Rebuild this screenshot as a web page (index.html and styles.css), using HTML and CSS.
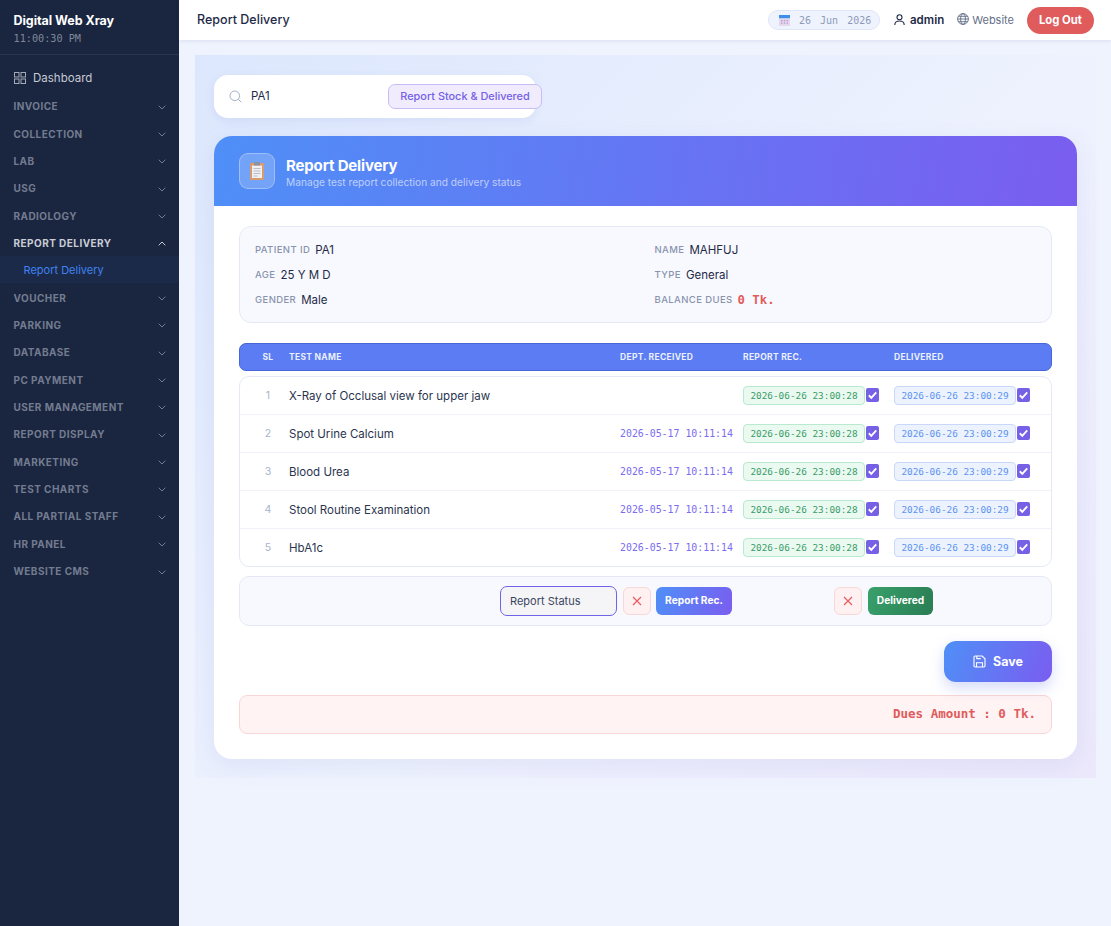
FILE: index.html
```html
<!DOCTYPE html>
<html lang="en">
<head>
<meta charset="utf-8">
<title>Report Delivery</title>
<link rel="stylesheet" href="styles.css">
</head>
<body>
<div class="app">
  <aside class="sidebar">
    <div class="brand">
      <div class="brand-name">Digital Web Xray</div>
      <div class="brand-time">11:00:30 PM</div>
    </div>
    <nav class="nav">
      <a class="dash"><svg width="12" height="12" viewBox="0 0 12 12" fill="none" stroke="currentColor"><rect x=".5" y=".5" width="4.5" height="4.5"/><rect x="7" y=".5" width="4.5" height="4.5"/><rect x=".5" y="7" width="4.5" height="4.5"/><rect x="7" y="7" width="4.5" height="4.5"/></svg>Dashboard</a>
      <a class="group">INVOICE<svg class="chev" viewBox="0 0 8 5"><path d="M.7.7 4 4 7.3.7"/></svg></a>
      <a class="group">COLLECTION<svg class="chev" viewBox="0 0 8 5"><path d="M.7.7 4 4 7.3.7"/></svg></a>
      <a class="group">LAB<svg class="chev" viewBox="0 0 8 5"><path d="M.7.7 4 4 7.3.7"/></svg></a>
      <a class="group">USG<svg class="chev" viewBox="0 0 8 5"><path d="M.7.7 4 4 7.3.7"/></svg></a>
      <a class="group">RADIOLOGY<svg class="chev" viewBox="0 0 8 5"><path d="M.7.7 4 4 7.3.7"/></svg></a>
      <a class="group open">REPORT DELIVERY<svg class="chev" viewBox="0 0 8 5"><path d="M.7 4.3 4 1 7.3 4.3"/></svg></a>
      <a class="sub">Report Delivery</a>
      <a class="group">VOUCHER<svg class="chev" viewBox="0 0 8 5"><path d="M.7.7 4 4 7.3.7"/></svg></a>
      <a class="group">PARKING<svg class="chev" viewBox="0 0 8 5"><path d="M.7.7 4 4 7.3.7"/></svg></a>
      <a class="group">DATABASE<svg class="chev" viewBox="0 0 8 5"><path d="M.7.7 4 4 7.3.7"/></svg></a>
      <a class="group">PC PAYMENT<svg class="chev" viewBox="0 0 8 5"><path d="M.7.7 4 4 7.3.7"/></svg></a>
      <a class="group">USER MANAGEMENT<svg class="chev" viewBox="0 0 8 5"><path d="M.7.7 4 4 7.3.7"/></svg></a>
      <a class="group">REPORT DISPLAY<svg class="chev" viewBox="0 0 8 5"><path d="M.7.7 4 4 7.3.7"/></svg></a>
      <a class="group">MARKETING<svg class="chev" viewBox="0 0 8 5"><path d="M.7.7 4 4 7.3.7"/></svg></a>
      <a class="group">TEST CHARTS<svg class="chev" viewBox="0 0 8 5"><path d="M.7.7 4 4 7.3.7"/></svg></a>
      <a class="group">ALL PARTIAL STAFF<svg class="chev" viewBox="0 0 8 5"><path d="M.7.7 4 4 7.3.7"/></svg></a>
      <a class="group">HR PANEL<svg class="chev" viewBox="0 0 8 5"><path d="M.7.7 4 4 7.3.7"/></svg></a>
      <a class="group">WEBSITE CMS<svg class="chev" viewBox="0 0 8 5"><path d="M.7.7 4 4 7.3.7"/></svg></a>
    </nav>
  </aside>
  <div class="main">
    <header class="topbar">
      <div class="page-title">Report Delivery</div>
      <div class="top-right">
        <div class="date-pill">
          <svg width="11" height="11" viewBox="0 0 11 11"><rect x="0" y="0" width="11" height="3.5" fill="#3f8fe8"/><rect x="0" y="3.5" width="11" height="7.5" fill="#e6d6ee"/><path d="M2 5h1.4v1.2H2zM4.8 5h1.4v1.2H4.8zM7.6 5H9v1.2H7.6zM2 7.6h1.4v1.2H2zM4.8 7.6h1.4v1.2H4.8zM7.6 7.6H9v1.2H7.6z" fill="#a99cc8"/></svg>
          <span>26 Jun 2026</span>
        </div>
        <div class="user"><svg width="11" height="12" viewBox="0 0 11 12" fill="none" stroke="#1e2a47" stroke-width="1.1"><circle cx="5.5" cy="3.3" r="2.5"/><path d="M.8 11c0-2.6 2-4 4.7-4s4.700 1.400 4.700 4"/></svg>admin</div>
        <div class="web"><svg width="12" height="12" viewBox="0 0 12 12" fill="none" stroke="#5f6b85" stroke-width=".9"><circle cx="6" cy="6" r="5.400"/><ellipse cx="6" cy="6" rx="2.400" ry="5.400"/><path d="M.6 6h10.800M1.400 3.300h9.200M1.400 8.700h9.200"/></svg><span>Website</span></div>
        <button class="logout">Log Out</button>
      </div>
    </header>
    <main class="content">
      <div class="inner">
        <div class="search-row">
          <div class="search">
            <svg width="13" height="13" viewBox="0 0 13 13" fill="none" stroke="#a3b0c8" stroke-width="1"><circle cx="5.800" cy="5.800" r="4.800"/><path d="m9.300 9.300 3 3"/></svg>
            <span class="search-val">PA1</span>
          </div>
          <button class="stock">Report Stock &amp; Delivered</button>
        </div>
        <section class="card">
          <div class="card-head">
            <div class="head-icon"><svg width="14" height="18" viewBox="0 0 14 18"><rect x="0" y="1" width="14" height="17" rx="1" fill="#d99a6c"/><rect x="2" y="3.500" width="10" height="12.500" fill="#eef0f4"/><rect x="4" y="0" width="6" height="3.500" rx=".6" fill="#8b93a3"/><path d="M3.500 6.500h7M3.500 9h7M3.500 11.500h7M3.500 14h4" stroke="#a9afbd" stroke-width=".8"/></svg></div>
            <div>
              <h1>Report Delivery</h1>
              <p>Manage test report collection and delivery status</p>
            </div>
          </div>
          <div class="card-body">
            <div class="info">
              <div class="info-item"><label>PATIENT ID</label><b>PA1</b></div>
              <div class="info-item"><label>NAME</label><b>MAHFUJ</b></div>
              <div class="info-item"><label>AGE</label><b>25 Y M D</b></div>
              <div class="info-item"><label>TYPE</label><b>General</b></div>
              <div class="info-item"><label>GENDER</label><b>Male</b></div>
              <div class="info-item"><label>BALANCE DUES</label><b class="dues">0 Tk.</b></div>
            </div>
            <div class="thead row-grid">
              <span class="c-sl">SL</span><span>TEST NAME</span><span>DEPT. RECEIVED</span><span>REPORT REC.</span><span>DELIVERED</span>
            </div>
            <div class="tbody">
              <div class="row row-grid">
                <span class="c-sl num">1</span><span class="name">X-Ray of Occlusal view for upper jaw</span><span class="dept"></span>
                <div class="stamp-cell"><span class="stamp green">2026-06-26 23:00:28</span><i class="check"><svg viewBox="0 0 14 14"><path d="m3 7.300 2.700 2.700L11 4.200"/></svg></i></div>
                <div class="stamp-cell"><span class="stamp blue">2026-06-26 23:00:29</span><i class="check"><svg viewBox="0 0 14 14"><path d="m3 7.300 2.700 2.700L11 4.200"/></svg></i></div>
              </div>
              <div class="row row-grid">
                <span class="c-sl num">2</span><span class="name">Spot Urine Calcium</span><span class="dept">2026-05-17 10:11:14</span>
                <div class="stamp-cell"><span class="stamp green">2026-06-26 23:00:28</span><i class="check"><svg viewBox="0 0 14 14"><path d="m3 7.300 2.700 2.700L11 4.200"/></svg></i></div>
                <div class="stamp-cell"><span class="stamp blue">2026-06-26 23:00:29</span><i class="check"><svg viewBox="0 0 14 14"><path d="m3 7.300 2.700 2.700L11 4.200"/></svg></i></div>
              </div>
              <div class="row row-grid">
                <span class="c-sl num">3</span><span class="name">Blood Urea</span><span class="dept">2026-05-17 10:11:14</span>
                <div class="stamp-cell"><span class="stamp green">2026-06-26 23:00:28</span><i class="check"><svg viewBox="0 0 14 14"><path d="m3 7.300 2.700 2.700L11 4.200"/></svg></i></div>
                <div class="stamp-cell"><span class="stamp blue">2026-06-26 23:00:29</span><i class="check"><svg viewBox="0 0 14 14"><path d="m3 7.300 2.700 2.700L11 4.200"/></svg></i></div>
              </div>
              <div class="row row-grid">
                <span class="c-sl num">4</span><span class="name">Stool Routine Examination</span><span class="dept">2026-05-17 10:11:14</span>
                <div class="stamp-cell"><span class="stamp green">2026-06-26 23:00:28</span><i class="check"><svg viewBox="0 0 14 14"><path d="m3 7.300 2.700 2.700L11 4.200"/></svg></i></div>
                <div class="stamp-cell"><span class="stamp blue">2026-06-26 23:00:29</span><i class="check"><svg viewBox="0 0 14 14"><path d="m3 7.300 2.700 2.700L11 4.200"/></svg></i></div>
              </div>
              <div class="row row-grid">
                <span class="c-sl num">5</span><span class="name">HbA1c</span><span class="dept">2026-05-17 10:11:14</span>
                <div class="stamp-cell"><span class="stamp green">2026-06-26 23:00:28</span><i class="check"><svg viewBox="0 0 14 14"><path d="m3 7.300 2.700 2.700L11 4.200"/></svg></i></div>
                <div class="stamp-cell"><span class="stamp blue">2026-06-26 23:00:29</span><i class="check"><svg viewBox="0 0 14 14"><path d="m3 7.300 2.700 2.700L11 4.200"/></svg></i></div>
              </div>
            </div>
            <div class="actions">
              <div class="status-select">Report Status</div>
              <button class="x"><svg viewBox="0 0 10 10"><path d="m1 1 8 8M9 1 1 9"/></svg></button>
              <button class="act act-blue">Report Rec.</button>
              <button class="x x2"><svg viewBox="0 0 10 10"><path d="m1 1 8 8M9 1 1 9"/></svg></button>
              <button class="act act-green">Delivered</button>
            </div>
            <div class="save-row">
              <button class="save"><svg width="13" height="13" viewBox="0 0 13 13" fill="none" stroke="#fff" stroke-width="1.100"><path d="M1 2.200C1 1.500 1.500 1 2.200 1h7L12 3.800v7c0 .7-.5 1.200-1.200 1.200H2.200C1.500 12 1 11.500 1 10.800z"/><path d="M3.500 12V7.800h6V12M3.800 1v2.600h4"/></svg>Save</button>
            </div>
            <div class="dues-bar">Dues Amount : 0 Tk.</div>
          </div>
        </section>
      </div>
    </main>
  </div>
</div>
</body>
</html>
```

FILE: styles.css
```css
* { box-sizing: border-box; }
html, body { margin: 0; height: 100%; }
body { font-family: "Inter", "Noto Sans", sans-serif; color: #1e2a47; background: #eff3fe; overflow: hidden; }
button { font-family: inherit; border: 0; cursor: pointer; padding: 0; }

.app { display: flex; height: 926px; }

.sidebar { width: 179px; flex: none; background: #1a2540; color: #fff; }
.brand { height: 55px; padding: 13px 13.500px 0; border-bottom: 1px solid #29344f; }
.brand-name { font-size: 12.500px; font-weight: 700; line-height: 16px; letter-spacing: -.05px; }
.brand-time { font-family: "DejaVu Sans Mono", monospace; font-size: 10.200px; line-height: 14px; margin-top: 3px; color: #7f8899; }
.nav { display: flex; flex-direction: column; padding-top: 9px; }
.nav a { display: flex; align-items: center; }
.dash { height: 28px; padding-left: 14px; gap: 7px; font-size: 11.500px; color: #c6cbd5; }
.dash svg { color: #a3a9b7; }
.group { height: 27.350px; padding: 1px 13px 0 13.500px; justify-content: space-between; font-size: 10px; font-weight: 700; letter-spacing: .45px; color: #737c8f; }
.group.open { color: #c9cdd6; }
.chev { width: 8px; height: 5px; fill: none; stroke: currentColor; stroke-width: 1; margin-top: 2px; }
.sub { height: 27.350px; padding-left: 23.500px; font-size: 11px; color: #3f82f0; background: #1c2a4a; }

.main { flex: 1; min-width: 0; display: flex; flex-direction: column; }
.topbar { height: 40px; flex: none; background: #fff; box-shadow: 0 1px 4px rgba(60, 80, 140, .12); display: flex; align-items: center; justify-content: space-between; padding: 0 17px 0 18px; position: relative; }
.page-title { font-size: 12.500px; font-weight: 500; color: #1e2a47; letter-spacing: .02px; margin-top: -2px; }
.top-right { display: flex; align-items: center; }
.date-pill { display: flex; align-items: center; gap: 9px; height: 20px; width: 112px; padding-left: 10px; background: #eff3fe; border: 1px solid #dfe6f7; border-radius: 10px; font-family: "DejaVu Sans Mono", monospace; font-size: 10px; color: #8d9ab8; word-spacing: 3px; }
.user { display: flex; align-items: center; gap: 5px; margin-left: 14px; font-size: 11.500px; font-weight: 600; color: #1e2a47; }
.web { display: flex; align-items: center; gap: 3px; margin-left: 13px; font-size: 11px; color: #646f88; }
.web svg { margin-top: -2px; }
.logout { margin-left: 13px; width: 67px; height: 27px; border-radius: 14px; background: #e05c5c; color: #fff; font-size: 11.300px; font-weight: 700; }

.content { flex: 1; padding: 15px 15px 0 16px; }
.inner { height: 723px; padding: 20px 19px 0 19px; background: linear-gradient(135deg, #dce7fd 0%, #eef2fe 55%, #ece8fc 100%); }
.search-row { display: flex; align-items: center; height: 43px; }
.search { width: 322px; height: 43px; background: #fff; border-radius: 14px; box-shadow: 0 3px 10px rgba(90, 110, 190, .1); display: flex; align-items: center; gap: 9px; padding-left: 15px; }
.search-val { font-size: 11.500px; color: #1e2a47; margin-top: -2px; }
.stock { margin-left: -148px; position: relative; width: 154px; height: 25px; border-radius: 7px; background: #f0ecfe; border: 1px solid #c9bdf8; color: #7560e6; font-size: 10.900px; font-weight: 500; margin-top: -1px; }

.card { margin-top: 18px; background: #fff; border-radius: 18px; overflow: hidden; box-shadow: 0 6px 24px rgba(90, 110, 190, .1); height: 623px; }
.card-head { height: 70px; background: linear-gradient(100deg, #4f8ff7 0%, #7a5df0 100%); display: flex; align-items: center; gap: 11px; padding: 0 25px; color: #fff; }
.card-head > div:last-child { padding-top: 2px; }
.head-icon { width: 36px; height: 36px; border-radius: 9px; background: rgba(255, 255, 255, .2); border: 1px solid rgba(255, 255, 255, .3); display: flex; align-items: center; justify-content: center; }
.card-head h1 { margin: 0; font-size: 15px; line-height: 19px; font-weight: 700; letter-spacing: -.15px; }
.card-head p { margin: 1px 0 0; font-size: 10.200px; line-height: 13px; color: rgba(255, 255, 255, .62); }
.card-body { padding: 20px 25px 0; }

.info { height: 97px; background: #f8f9fe; border: 1px solid #e5e9f5; border-radius: 12px; padding: 10px 15px; display: grid; grid-template-columns: 399.500px 1fr; grid-auto-rows: 25px; }
.info-item { display: flex; align-items: center; gap: 5px; }
.info-item label { font-size: 9.500px; font-weight: 500; letter-spacing: .4px; color: #8893ad; }
.info-item b { font-size: 11.500px; font-weight: 400; color: #1e2a47; }
.info-item b.dues { font-family: "DejaVu Sans Mono", monospace; font-weight: 700; font-size: 12.300px; color: #e05c5c; }

.row-grid { display: grid; grid-template-columns: 49px 331px 123px 151px 1fr; align-items: center; }
.c-sl { text-align: center; padding-left: 7px; }
.thead { height: 28px; margin-top: 20px; background: #5b7cf2; border: 1px solid #4766d8; border-radius: 7px; color: #eaf0ff; font-size: 8.500px; font-weight: 700; letter-spacing: .3px; }
.tbody { margin-top: 5px; border: 1px solid #e5e9f5; border-radius: 10px; background: #fff; }
.row { height: 38px; border-bottom: 1px solid #eff2fa; }
.row:last-child { border-bottom: 0; height: 37px; }
.num { font-size: 10.500px; color: #a8b3ca; }
.name { font-size: 11.500px; color: #2b3550; }
.dept { font-family: "DejaVu Sans Mono", monospace; font-size: 9.900px; color: #7b6cf0; }
.stamp-cell { display: flex; align-items: center; gap: 1px; }
.stamp { width: 122px; height: 19px; border-radius: 4px; font-family: "DejaVu Sans Mono", monospace; font-size: 9.400px; line-height: 17px; text-align: center; border: 1px solid; }
.stamp.green { background: #eafaf1; border-color: #b9e9cf; color: #3c9a68; }
.stamp.blue { background: #ecf2fe; border-color: #c9d8f8; color: #5c93f0; }
.check { width: 13px; height: 14px; border-radius: 2px; background: #7560e6; display: block; margin-top: -1px; }
.check svg { display: block; width: 13px; height: 14px; fill: none; stroke: #fff; stroke-width: 2; }

.actions { margin-top: 9px; height: 50px; background: #f8f9fe; border: 1px solid #e5e9f5; border-radius: 10px; display: flex; align-items: center; padding-left: 260px; }
.status-select { width: 117px; height: 30px; border: 1px solid #6f63e8; border-radius: 7px; background: #f5f5f7; font-size: 11px; color: #3b4560; display: flex; align-items: center; padding-left: 9px; }
.x { width: 28px; height: 28px; margin-left: 6px; border: 1px solid #f8d7d7; border-radius: 6px; background: #fff1f1; display: flex; align-items: center; justify-content: center; }
.x svg { width: 10px; height: 10px; fill: none; stroke: #e85c5c; stroke-width: 1.200; }
.x2 { margin-left: 102px; }
.act { height: 28px; border-radius: 6px; color: #fff; font-size: 10.200px; font-weight: 700; margin-left: 5px; padding-bottom: 2px; }
.act-blue { width: 76px; background: linear-gradient(110deg, #4f8ff7, #7a5df0); }
.act-green { width: 65px; margin-left: 6px; background: linear-gradient(110deg, #38a06b, #2a7d53); }

.save-row { display: flex; justify-content: flex-end; margin-top: 15px; }
.save { width: 108px; height: 41px; border-radius: 12px; background: linear-gradient(110deg, #4f8ff7, #7a5df0); color: #fff; font-size: 12.500px; font-weight: 700; display: flex; align-items: center; justify-content: center; gap: 7px; box-shadow: 0 6px 14px rgba(90, 110, 230, .25); }

.dues-bar { margin-top: 13px; height: 39px; background: #fff3f3; border: 1px solid #f8d6d6; border-radius: 8px; font-family: "DejaVu Sans Mono", monospace; font-weight: 700; font-size: 12.500px; color: #e05c5c; display: flex; align-items: center; justify-content: flex-end; padding: 0 15px 2px 0; }
```
